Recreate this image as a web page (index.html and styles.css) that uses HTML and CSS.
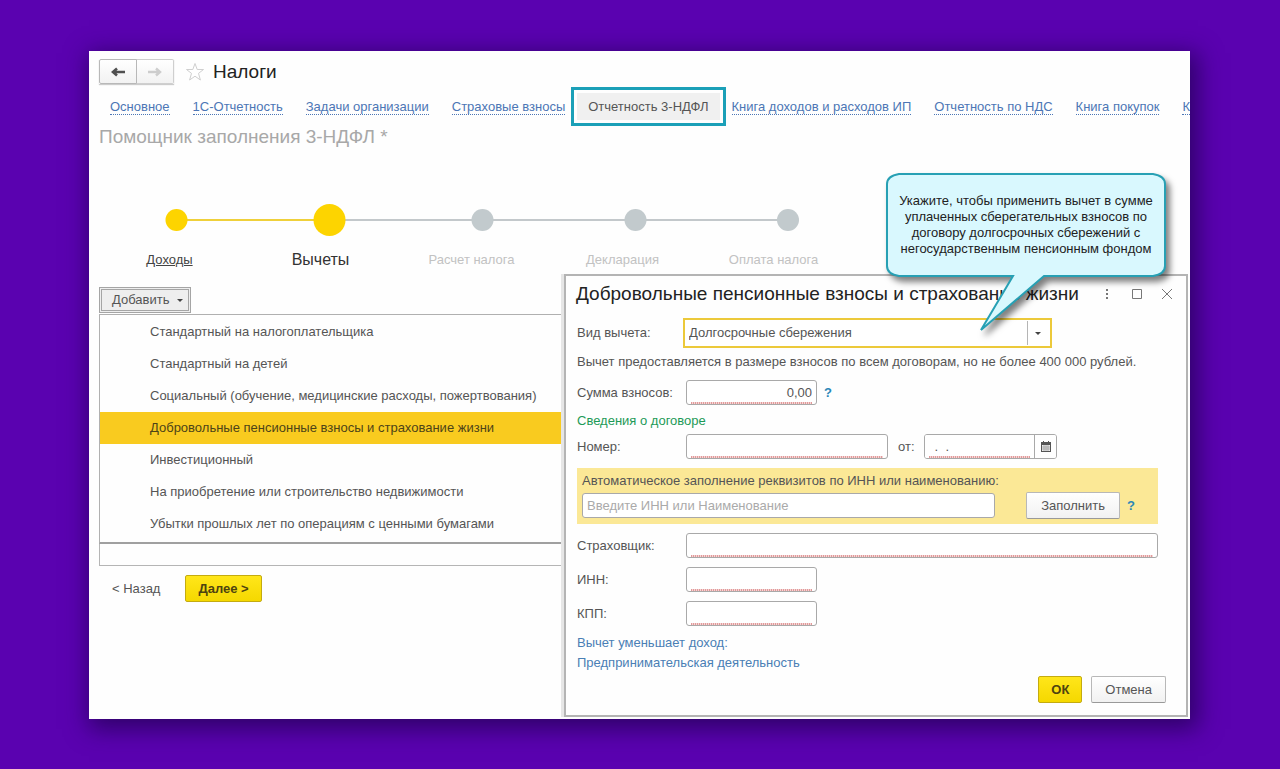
FILE: index.html
```html
<!DOCTYPE html>
<html lang="ru">
<head>
<meta charset="utf-8">
<title>Налоги</title>
<meta name="viewport" content="width=device-width, initial-scale=1">
<link rel="stylesheet" href="styles.css">
</head>
<body>
<main class="window">
  <header class="head">
    <div class="history">
      <button type="button" aria-label="Назад по истории"><svg width="16" height="12" viewBox="0 0 16 12"><path d="M15 6H4M7 2.500 3 6l4 3.500" fill="none" stroke="#505050" stroke-width="2.600"/></svg></button>
      <button type="button" aria-label="Вперед по истории"><svg width="16" height="12" viewBox="0 0 16 12"><path d="M1 6h11M9 2.500 13 6 9 9.500" fill="none" stroke="#cdcdcd" stroke-width="2.400"/></svg></button>
    </div>
    <svg class="star" width="20" height="20" viewBox="0 0 20 20"><path d="M10 1.500l2.200 6H18.500l-5 3.900 1.900 6.600L10 14.200 4.600 18l1.900-6.600-5-3.900h6.300z" fill="#fff" stroke="#cfcfcf"/></svg>
    <h1>Налоги</h1>
  </header>
  <nav class="tabs">
    <a href="#">Основное</a>
    <a href="#">1С-Отчетность</a>
    <a href="#">Задачи организации</a>
    <a href="#">Страховые взносы</a>
    <a href="#" class="current" aria-current="page">Отчетность 3-НДФЛ</a>
    <a href="#">Книга доходов и расходов ИП</a>
    <a href="#">Отчетность по НДС</a>
    <a href="#">Книга покупок</a>
    <a href="#">К</a>
  </nav>
  <h2 class="subtitle">Помощник заполнения 3-НДФЛ *</h2>

  <svg class="track" width="700" height="40" viewBox="0 0 700 40">
    <path d="M77.500 20h153" stroke="#efd03a" stroke-width="2"/>
    <path d="M230.500 20h459" stroke="#c3c8cb" stroke-width="2"/>
    <circle cx="77.500" cy="20" r="11" fill="#fdd400"/>
    <circle cx="230.500" cy="20" r="16" fill="#fdd400"/>
    <circle cx="383.500" cy="20" r="11" fill="#c2cacd"/>
    <circle cx="536.500" cy="20" r="11" fill="#c2cacd"/>
    <circle cx="689" cy="20" r="11" fill="#c2cacd"/>
  </svg>
  <ol class="steps">
    <li><a href="#">Доходы</a></li>
    <li class="active">Вычеты</li>
    <li class="next">Расчет налога</li>
    <li class="next">Декларация</li>
    <li class="next">Оплата налога</li>
  </ol>

  <button type="button" class="add">Добавить <svg width="6" height="3" viewBox="0 0 6 3"><path d="M0 0h6L3 3z" fill="#444"/></svg></button>
  <div class="panel">
    <div class="menu" role="menu">
      <button type="button" role="menuitem">Стандартный на налогоплательщика</button>
      <button type="button" role="menuitem">Стандартный на детей</button>
      <button type="button" role="menuitem">Социальный (обучение, медицинские расходы, пожертвования)</button>
      <button type="button" role="menuitem" class="picked">Добровольные пенсионные взносы и страхование жизни</button>
      <button type="button" role="menuitem">Инвестиционный</button>
      <button type="button" role="menuitem">На приобретение или строительство недвижимости</button>
      <button type="button" role="menuitem">Убытки прошлых лет по операциям с ценными бумагами</button>
    </div>
  </div>
  <div class="wizard">
    <button type="button" class="back">&lt; Назад</button>
    <button type="button" class="btn primary">Далее &gt;</button>
  </div>

  <section class="dialog" role="dialog" aria-labelledby="dialog-title">
    <header class="dialog-head">
      <h2 id="dialog-title">Добровольные пенсионные взносы и страхование жизни</h2>
      <div class="tools">
        <button type="button" aria-label="Еще"><svg width="12" height="12" viewBox="0 0 12 12"><path d="M5 1h2v2H5zM5 5h2v2H5zM5 9h2v2H5z" fill="#777"/></svg></button>
        <button type="button" aria-label="Развернуть"><svg width="12" height="12" viewBox="0 0 12 12"><path d="M1.500 1.500h9v9h-9z" fill="none" stroke="#777"/></svg></button>
        <button type="button" aria-label="Закрыть"><svg width="12" height="12" viewBox="0 0 12 12"><path d="M1 1l10 10M11 1 1 11" stroke="#777"/></svg></button>
      </div>
    </header>
    <form class="form">
      <div class="row kind">
        <label for="kind">Вид вычета:</label>
        <div class="combo">
          <select id="kind"><option>Долгосрочные сбережения</option></select>
          <svg width="6" height="3" viewBox="0 0 6 3"><path d="M0 0h6L3 3z" fill="#444"/></svg>
        </div>
      </div>
      <p class="note">Вычет предоставляется в размере взносов по всем договорам, но не более 400 000 рублей.</p>
      <div class="row sum">
        <label for="sum">Сумма взносов:</label>
        <input id="sum" class="field short required number" type="text" value="0,00">
        <a href="#" class="help">?</a>
      </div>
      <h3>Сведения о договоре</h3>
      <div class="row contract">
        <label for="num">Номер:</label>
        <input id="num" class="field medium required" type="text">
        <label for="date" class="from">от:</label>
        <div class="date">
          <input id="date" class="required" type="text" value=" .  .">
          <button type="button" aria-label="Выбрать дату"><svg width="10" height="11" viewBox="0 0 10 11"><path d="M0 1h2V0h1v1h4V0h1v1h2v10H0z" fill="#555"/><path d="M1 4h8v6H1z" fill="#eee"/><path d="M1 6h8M1 8h8M3 4v6M5 4v6M7 4v6" stroke="#888" stroke-width=".6"/></svg></button>
        </div>
      </div>
      <div class="autofill">
        <label for="auto">Автоматическое заполнение реквизитов по ИНН или наименованию:</label>
        <div class="autofill-row">
          <input id="auto" class="field" type="text" placeholder="Введите ИНН или Наименование">
          <button type="button" class="btn">Заполнить</button>
          <a href="#" class="help">?</a>
        </div>
      </div>
      <div class="row">
        <label for="insurer">Страховщик:</label>
        <input id="insurer" class="field wide required" type="text">
      </div>
      <div class="row">
        <label for="inn">ИНН:</label>
        <input id="inn" class="field short required" type="text">
      </div>
      <div class="row">
        <label for="kpp">КПП:</label>
        <input id="kpp" class="field short required" type="text">
      </div>
      <div class="links">
        <a href="#">Вычет уменьшает доход:</a>
        <a href="#">Предпринимательская деятельность</a>
      </div>
      <div class="actions">
        <button type="button" class="btn primary">ОК</button>
        <button type="button" class="btn">Отмена</button>
      </div>
    </form>
  </section>

  <aside class="callout">
    <svg width="290" height="170" viewBox="0 0 290 170"><path d="M13 1H267Q279 3 279 11V93Q279 101 267 103H158L95 157 127 103H13Q1 101 1 93V11Q1 3 13 1Z" fill="#d9f8fe" stroke="#27a0b4" stroke-width="2"/></svg>
    <p>Укажите, чтобы применить вычет в сумме уплаченных сберегательных взносов по договору долгосрочных сбережений с негосударственным пенсионным фондом</p>
  </aside>
</main>
</body>
</html>
```
FILE: styles.css
```css
* { box-sizing: border-box; }

body {
  margin: 0;
  min-height: 100vh;
  padding: 51px 90px 50px 89px;
  display: flex;
  background: #5a02b0;
  color: #555;
  font: 13px/20px "Liberation Sans", Arial, sans-serif;
}

h1, h2, h3, p, ol { margin: 0; padding: 0; font-weight: normal; }
button, input, select { font: inherit; color: inherit; }
button { cursor: pointer; }

.window {
  position: relative;
  flex: 1;
  min-width: 0;
  padding: 8px 0 0 10px;
  background: #fefefe;
  box-shadow: 4px 6px 22px 4px rgba(20, 0, 60, 0.6);
}

.head { display: flex; align-items: center; height: 25px; }
.history { display: flex; height: 25px; box-shadow: 0 1px 1px #ccc; }
.history button {
  width: 38px;
  padding: 0;
  display: flex;
  align-items: center;
  justify-content: center;
  border: 1px solid #b8b8b8;
  border-radius: 2px 0 0 2px;
  background: linear-gradient(#fff, #f2f2f2);
}
.history button + button { margin-left: -1px; border-radius: 0 2px 2px 0; border-color: #cfcfcf; border-left-color: #b8b8b8; }
.star { margin: 0 8px 0 11px; }
h1 { font-size: 19px; color: #222; }

.tabs {
  display: flex;
  gap: 23px;
  padding: 9px 0 7px 11px;
  overflow: hidden;
  white-space: nowrap;
}
.tabs a {
  height: 21px;
  margin-top: 1px;
  padding-top: 3px;
  color: #4c76b5;
  text-decoration: none;
  border-bottom: 1px dotted #4c76b5;
}
.tabs .current {
  height: 27px;
  margin: 0 -11px;
  padding: 4px 11px 0;
  color: #555;
  background: #f0f0f0;
  border: 0;
  outline: 3px solid #1ba0b8;
  outline-offset: 3px;
}

.subtitle { font-size: 19px; color: #a8a8a8; }

.track { display: block; margin-top: 53px; }
.steps {
  display: grid;
  grid-template-columns: repeat(5, 151px);
  margin: 10px 0 0 -5px;
  list-style: none;
  text-align: center;
}
.steps a { color: #444; }
.steps .active { font-size: 16px; color: #333; }
.steps .next { color: #c2c2c2; }

.add {
  display: flex;
  align-items: center;
  gap: 8px;
  height: 26px;
  margin: 17px 0 1px;
  padding: 0 5px 0 10px;
  border: 3px double #a5a5a5;
  background: #eee;
}

.panel {
  margin: 0 10px 0 0;
  padding-bottom: 21px;
  border: solid #b5b5b5;
  border-width: 0 1px 1px;
}
.menu {
  width: 465px;
  margin-left: -1px;
  padding: 1px 0 2px;
  border: 1px solid #b0b0b0;
  border-bottom: 2px solid #a0a0a0;
}
.menu button {
  display: block;
  width: 100%;
  height: 32px;
  padding: 0 0 0 50px;
  border: 0;
  background: none;
  text-align: left;
  white-space: nowrap;
}
.menu .picked { background: #f9cb1f; color: #4d4318; }

.wizard { display: flex; gap: 25px; margin: 9px 0 0 13px; }
.back { padding: 0; border: 0; background: none; }

.btn {
  height: 27px;
  padding: 0 13px;
  border: 1px solid #b8b8b8;
  border-bottom-color: #999;
  border-radius: 2px;
  background: linear-gradient(#fff, #f1f1f1);
}
.btn.primary {
  padding: 0 12px;
  border-color: #c4ab10;
  background: linear-gradient(#ffe61a, #f5d800);
  color: #4d4310;
  font-weight: bold;
}

.dialog {
  position: absolute;
  top: 223px;
  left: 475px;
  right: 2px;
  border: 2px solid #b4b4b4;
  background: #fefefe;
  box-shadow: -3px 0 0 #e6e6e6;
}
.dialog-head {
  display: flex;
  align-items: center;
  justify-content: space-between;
  height: 36px;
  padding: 0 13px 0 10px;
}
.dialog-head h2 { font-size: 19px; color: #222; white-space: nowrap; }
.tools { display: flex; gap: 18px; }
.tools button { display: flex; padding: 0; border: 0; background: none; }

.form { padding: 6px 28px 12px 11px; }
.row { display: grid; grid-template-columns: 109px 1fr; margin-top: 9px; align-items: center; }
.kind { grid-template-columns: 106px 369px; margin-top: 0; }
.combo {
  display: flex;
  align-items: center;
  height: 30px;
  padding-right: 9px;
  border: 2px solid #ecc93a;
  background: #fff;
}
.combo select {
  flex: 1;
  height: 24px;
  margin-right: 7px;
  padding: 0 4px;
  appearance: none;
  border: 0;
  border-right: 1px solid #b5b5b5;
  background: none;
}
.note { margin-top: 4px; white-space: nowrap; }
.field, .date {
  height: 25px;
  border: 1px solid #a9a9a9;
  border-radius: 3px;
  background-color: #fff;
}
.field { min-width: 0; padding: 0 4px; }
.short { width: 131px; }
.medium { width: 202px; }
.wide { width: 100%; }
.number { text-align: right; }
.required {
  background-image: repeating-linear-gradient(90deg, #e09a9a 0 1px, #f6d6d6 1px 2px);
  background-repeat: no-repeat;
  background-size: calc(100% - 8px) 2px;
  background-position: 4px 100%;
}
.sum { grid-template-columns: 109px 131px 1fr; margin-top: 8px; }
.help { margin-left: 7px; color: #2b87b8; text-decoration: none; font-weight: bold; }
h3 { margin-top: 6px; font-size: 13px; color: #1d9a57; }
.contract { grid-template-columns: 109px 202px 36px 133px; margin-top: 3px; }
.from { padding-left: 10px; }
.date { display: flex; overflow: hidden; }
.date input { flex: 1; min-width: 0; padding: 0 6px; border: 0; background-color: #fff; white-space: pre; }
.date button {
  width: 22px;
  padding: 0;
  display: flex;
  align-items: center;
  justify-content: center;
  border: 0;
  border-left: 1px solid #a9a9a9;
  background: #fff;
}
.autofill { margin-top: 9px; padding: 3px 23px 5px 5px; background: #fbe896; }
.autofill label { display: block; }
.autofill-row { display: flex; align-items: center; margin-top: 1px; }
.autofill-row .field { flex: 1; margin-right: 31px; }
.autofill-row .btn { min-width: 94px; }
.autofill-row .field::placeholder { color: #aaa; }
.links { display: grid; margin-top: 7px; justify-items: start; }
.links a { color: #4a7fb5; text-decoration: none; }
.actions { display: flex; justify-content: flex-end; gap: 9px; margin: 3px -8px 0 0; }

.callout {
  position: absolute;
  top: 122px;
  left: 797px;
  width: 280px;
}
.callout svg { position: absolute; top: 0; left: 0; filter: drop-shadow(4px 5px 3px rgba(0, 0, 0, 0.5)); }
.callout p {
  position: relative;
  padding: 20px 6px 0;
  color: #222;
  line-height: 16px;
  text-align: center;
}
```
